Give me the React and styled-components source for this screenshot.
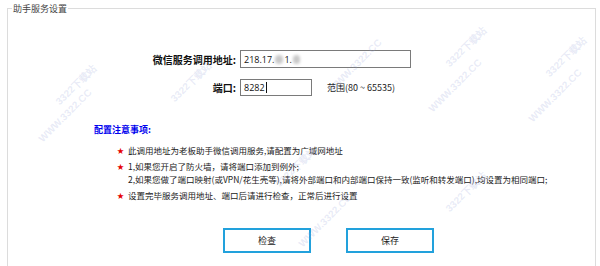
import React from 'react'
import styled, { createGlobalStyle } from 'styled-components'

const GlobalStyle = createGlobalStyle`
  html, body {
    margin: 0;
    padding: 0;
    background: #ffffff;
  }
  body {
    width: 600px;
    height: 266px;
    overflow: hidden;
    font-family: "Noto Sans CJK SC", "Noto Sans", sans-serif;
    color: #111;
  }
`

const Page = styled.div`
  position: relative;
  padding: 3px 4px 0 7px;
  height: 263px;
  overflow: hidden;
`

const Panel = styled.fieldset`
  margin: 0;
  padding: 0 0 40px 0;
  border: 1px solid #dcdcdc;
  min-width: 0;
`

const Legend = styled.legend`
  margin-left: 4px;
  padding: 0 1px;
  font-size: 9px;
  line-height: 11px;
  color: #444;
`

const FormGrid = styled.div`
  display: grid;
  grid-template-columns: 228px auto;
  column-gap: 4px;
  row-gap: 11px;
  align-items: center;
  margin-top: 36px;
`

const Label = styled.div`
  text-align: right;
  font-size: 10px;
  font-weight: bold;
  color: #111;
`

const FieldLine = styled.div`
  display: flex;
  align-items: center;
`

const TextBox = styled.div`
  box-sizing: border-box;
  width: ${p => p.$width}px;
  height: ${p => p.$height}px;
  border: 1px solid #7a7a7a;
  padding: 0 3px;
  display: flex;
  align-items: center;
  font-family: "Open Sans", "Noto Sans", sans-serif;
  font-size: 9px;
  color: #111;
  background: #fff;
`

const Blur = styled.span`
  display: inline-block;
  width: ${p => p.$width}px;
  height: 9px;
  margin: 0 1px;
  background: #c8c8c8;
  border-radius: 4px;
  filter: blur(1.5px);
`

const Caret = styled.span`
  display: inline-block;
  width: 1px;
  height: 11px;
  margin-left: 1px;
  background: #111;
`

const Hint = styled.span`
  margin-left: 15px;
  font-size: 9px;
  color: #222;
`

const NotesTitle = styled.div`
  margin: 27px 0 0 86px;
  font-size: 9px;
  font-weight: bold;
  color: #0000ee;
`

const NotesList = styled.ul`
  list-style: none;
  margin: 8px 0 0 109px;
  padding: 0;
  display: flex;
  flex-direction: column;
  gap: 3px;
`

const Note = styled.li`
  display: flex;
  align-items: flex-start;
  font-size: 8.5px;
  line-height: 13px;
  color: #222;
`

const Star = styled.span`
  width: 11px;
  flex: none;
  color: #e60000;
  font-size: 7px;
`

const Actions = styled.div`
  display: flex;
  gap: 35px;
  margin: 26px 0 0 215px;
`

const Button = styled.button`
  box-sizing: border-box;
  width: 88px;
  height: 25px;
  border: 2px solid #22a1dc;
  background: #fff;
  font-family: "Noto Sans CJK SC", sans-serif;
  font-size: 9px;
  color: #222;
  padding: 0;
`

const Watermark = styled.div`
  position: absolute;
  left: ${p => p.$x}px;
  top: ${p => p.$y}px;
  transform: rotate(-45deg);
  font-family: "Liberation Sans", sans-serif;
  font-size: 10px;
  font-weight: bold;
  color: rgba(150, 160, 215, 0.22);
  white-space: nowrap;
  pointer-events: none;
`

const marks = [
  { x: 50, y: 78, t: '3322下载站' },
  { x: 30, y: 110, t: 'WWW.3322.CC' },
  { x: 165, y: 75, t: '3322下载站' },
  { x: 320, y: 60, t: 'WWW.3322.CC' },
  { x: 440, y: 40, t: '3322下载站' },
  { x: 420, y: 80, t: 'WWW.3322.CC' },
  { x: 270, y: 160, t: '3322下载站' },
  { x: 290, y: 215, t: 'WWW.3322.CC' },
  { x: 540, y: 50, t: '3322下载站' },
  { x: 520, y: 90, t: 'WWW.3322.CC' },
  { x: 440, y: 185, t: '3322下载站' },
]

const notes = [
  ['此调用地址为老板助手微信调用服务,请配置为广域网地址'],
  ['1,如果您开启了防火墙，请将端口添加到例外;', '2,如果您做了端口映射(或VPN/花生壳等),请将外部端口和内部端口保持一致(监听和转发端口),均设置为相同端口;'],
  ['设置完毕服务调用地址、端口后请进行检查，正常后进行设置'],
]

export default function App() {
  return (
    <Page>
      <GlobalStyle />
      <Panel>
        <Legend>助手服务设置</Legend>
        <FormGrid>
          <Label>微信服务调用地址:</Label>
          <FieldLine>
            <TextBox $width={171} $height={18}>
              218.17.<Blur $width={8} />1.<Blur $width={7} />
            </TextBox>
          </FieldLine>
          <Label>端口:</Label>
          <FieldLine>
            <TextBox $width={72} $height={17}>
              8282<Caret />
            </TextBox>
            <Hint>范围(80 ~ 65535)</Hint>
          </FieldLine>
        </FormGrid>
        <NotesTitle>配置注意事项:</NotesTitle>
        <NotesList>
          {notes.map((lines, i) => (
            <Note key={i}>
              <Star>★</Star>
              <div>
                {lines.map((l, j) => (
                  <div key={j}>{l}</div>
                ))}
              </div>
            </Note>
          ))}
        </NotesList>
        <Actions>
          <Button>检查</Button>
          <Button>保存</Button>
        </Actions>
      </Panel>
      {marks.map((m, i) => (
        <Watermark key={i} $x={m.x} $y={m.y}>{m.t}</Watermark>
      ))}
    </Page>
  )
}
